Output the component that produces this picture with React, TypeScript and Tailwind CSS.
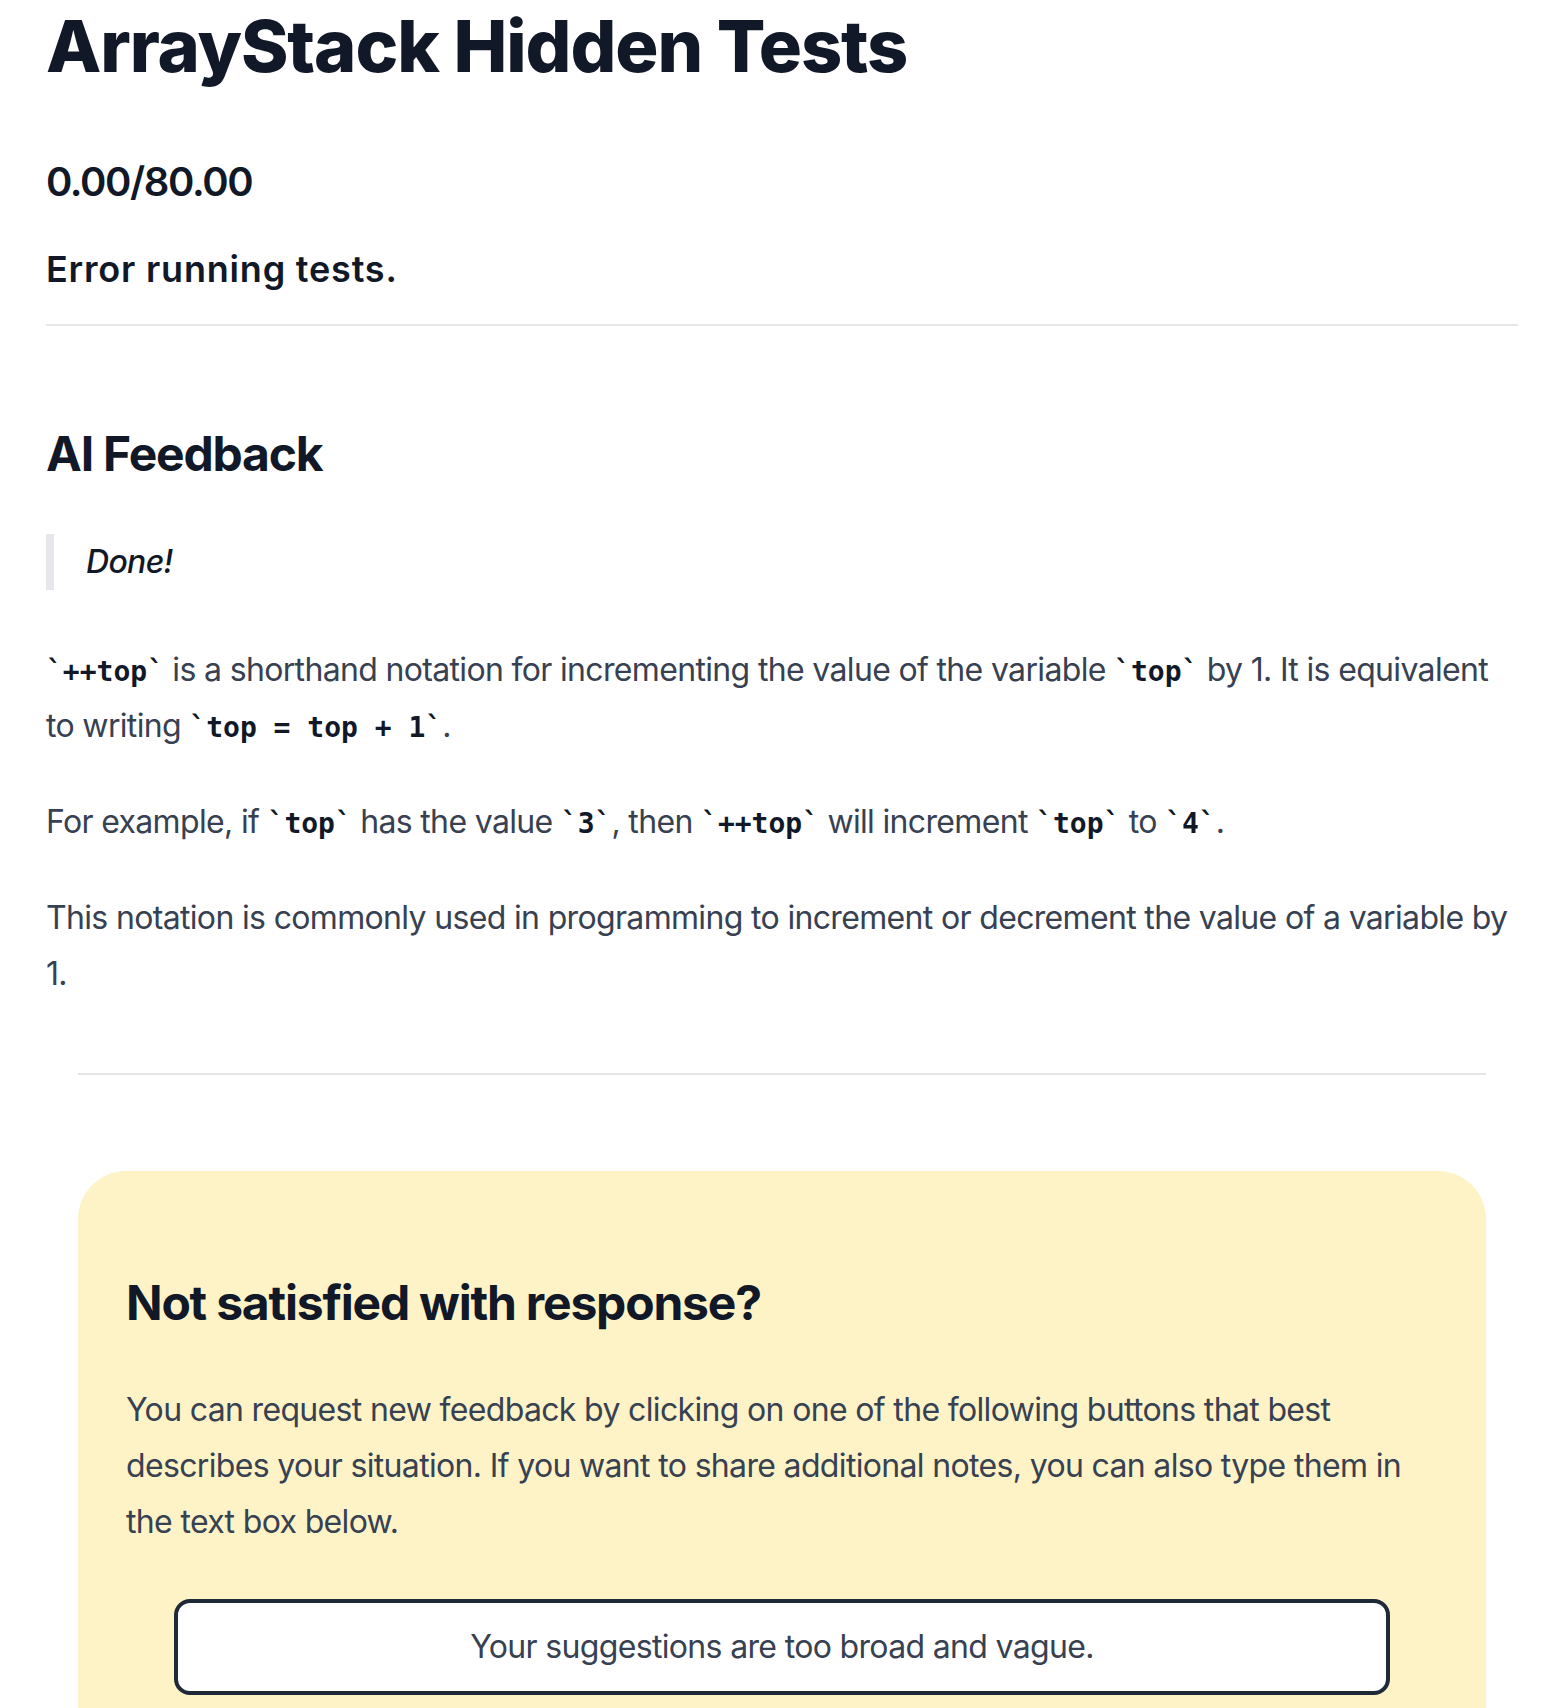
import React from "react";

const Code = ({ children }: { children: React.ReactNode }) => (
  <code className="font-['DejaVu_Sans_Mono','Liberation_Mono',monospace] text-[28px] leading-none tracking-normal font-semibold text-[#111827]">
    `{children}`
  </code>
);

export default function App() {
  return (
    <div className="min-h-screen bg-white font-['Inter','Noto_Sans',sans-serif] text-[#374151]">
      <div className="pl-[46px] pr-[27px] pt-[6px] pb-[40px]">
        <h1 className="text-[72px] leading-[80px] font-extrabold tracking-[-0.015em] text-[#111827]">
          ArrayStack Hidden Tests
        </h1>
        <h3 className="mt-[64px] text-[40px] leading-[64px] font-semibold tracking-[-1.4px] text-[#111827]">
          0.00/80.00
        </h3>
        <h4 className="mt-[31px] text-[36px] leading-[48px] font-semibold tracking-[0.8px] text-[#111827]">
          Error running tests.
        </h4>
        <hr className="mt-[31px] border-0 border-t-2 border-[#e5e7eb]" />
        <h2 className="mt-[96px] text-[48px] leading-[64px] font-bold tracking-[-1.2px] text-[#111827]">
          AI Feedback
        </h2>
        <blockquote className="mt-[48px] border-l-8 border-[#e5e7eb] pl-[32px] text-[32px] leading-[56px] font-medium italic tracking-[-0.66px] text-[#111827]">
          Done!
        </blockquote>
        <div className="text-[32px] leading-[56px] tracking-[-0.66px]">
          <p className="mt-[52px]">
            <Code>++top</Code> is a shorthand notation for incrementing the value of the variable <Code>top</Code> by 1. It is equivalent to writing <Code>top = top + 1</Code>.
          </p>
          <p className="mt-[40px]">
            For example, if <Code>top</Code> has the value <Code>3</Code>, then <Code>++top</Code> will increment <Code>top</Code> to <Code>4</Code>.
          </p>
          <p className="mt-[40px]">
            This notation is commonly used in programming to increment or decrement the value of a variable by 1.
          </p>
        </div>
        <div className="mx-[32px]">
          <hr className="mt-[71px] border-0 border-t-2 border-[#e5e7eb]" />
          <div className="mt-[96px] rounded-[48px] bg-[#fef3c7] px-[48px] pt-[100px] pb-[60px]">
            <h2 className="text-[48px] leading-[64px] font-bold tracking-[-1.2px] text-[#111827]">
              Not satisfied with response?
            </h2>
            <p className="mt-[47px] text-[32px] leading-[56px] tracking-[-0.66px]">
              You can request new feedback by clicking on one of the following buttons that best describes your situation. If you want to share additional notes, you can also type them in the text box below.
            </p>
            <div className="mx-[48px] mt-[49px] flex flex-col gap-[24px]">
              <button className="rounded-[16px] border-4 border-[#1f2937] bg-white py-[16px] text-center text-[32px] leading-[56px] tracking-[-0.66px] text-[#374151]">
                Your suggestions are too broad and vague.
              </button>
              <button className="rounded-[16px] border-4 border-[#1f2937] bg-white py-[16px] text-center text-[32px] leading-[56px] tracking-[-0.66px] text-[#374151]">
                Your suggestions are not helpful.
              </button>
            </div>
          </div>
        </div>
      </div>
    </div>
  );
}
